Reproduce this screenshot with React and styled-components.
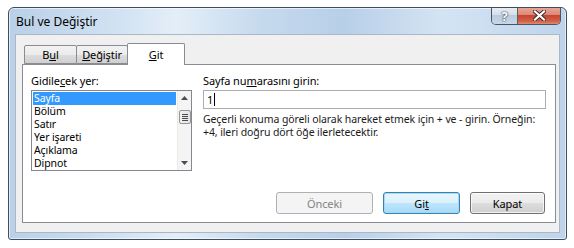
import React from "react";
import styled, { createGlobalStyle } from "styled-components";

const Global = createGlobalStyle`
  html, body { margin: 0; padding: 0; background: #ffffff; }
  body { font-family: "Noto Sans", "Open Sans", sans-serif; font-size: 10.5px; letter-spacing: -0.1px; color: #000; }
  * { box-sizing: border-box; }
`;

const Window = styled.div`
  margin: 7px 0 0 8px;
  width: 559px;
  height: 233px;
  display: flex;
  flex-direction: column;
  border: 1px solid #3e4e60;
  border-radius: 6px 6px 3px 3px;
  background: linear-gradient(90deg, #b9d0e8 0%, #cfe0f1 18%, #e4eef8 30%, #c6daee 45%, #b8cfe8 60%, #d4e4f3 78%, #bed4eb 100%);
  box-shadow: inset 0 0 0 1px rgba(255,255,255,0.6);
  overflow: hidden;
`;

const TitleBar = styled.div`
  height: 26px;
  display: flex;
  align-items: flex-start;
  justify-content: space-between;
  padding-left: 7px;
  flex: none;
`;

const Title = styled.div`
  font-size: 12px;
  line-height: 26px;
  padding-top: 1px;
  letter-spacing: 0;
  color: #000;
`;

const Controls = styled.div`
  display: flex;
  margin-right: 5px;
  margin-top: -1px;
  border: 1px solid #4a5668;
  border-top: none;
  border-radius: 0 0 5px 5px;
  overflow: hidden;
  height: 18px;
`;

const CtrlButton = styled.div`
  width: ${p => p.$w}px;
  height: 17px;
  display: flex;
  align-items: center;
  justify-content: center;
  background: ${p => p.$close
    ? "linear-gradient(180deg, #e9a99c 0%, #dc8a78 45%, #c5452d 50%, #d2634c 85%, #e48a6e 100%)"
    : "linear-gradient(180deg, #e8eef5 0%, #d5e0ec 45%, #bccbdc 50%, #c9d8e8 100%)"};
  border-left: ${p => p.$close ? "1px solid #5a5f6a" : "none"};
  color: #fff;
  font-size: 13px;
  font-weight: bold;
  text-shadow: 0 0 2px #334, 0 0 1px #334;
`;

const Body = styled.div`
  flex: 1;
  margin: 0 6px 6px 6px;
  background: #f0f0f0;
  border: 1px solid #a9b7c6;
  padding: 8px 3px 9px 6px;
  display: flex;
  flex-direction: column;
`;

const Tabs = styled.div`
  display: flex;
  align-items: flex-end;
  height: 21px;
  padding-left: 2px;
  position: relative;
  z-index: 1;
`;

const Tab = styled.div`
  width: ${p => p.$w}px;
  height: ${p => (p.$active ? 22 : 19)}px;
  margin-bottom: ${p => (p.$active ? -1 : 0)}px;
  margin-left: ${p => (p.$first ? 0 : -1)}px;
  border: 1px solid #898c95;
  border-bottom: ${p => (p.$active ? "none" : "1px solid #898c95")};
  background: ${p => (p.$active ? "#ffffff" : "linear-gradient(180deg, #f3f3f3 0%, #ebebeb 50%, #dddddd 51%, #cfcfcf 100%)")};
  display: flex;
  justify-content: center;
  align-items: ${p => (p.$active ? "flex-start" : "center")};
  padding-top: ${p => (p.$active ? 3 : 0)}px;
  font-size: 11px;
  border-radius: 2px 2px 0 0;
`;

const Panel = styled.div`
  flex: 1;
  background: #fff;
  border: 1px solid #898c95;
  padding: 9px 9px 8px 8px;
  display: flex;
  flex-direction: column;
`;

const Columns = styled.div`
  display: grid;
  grid-template-columns: 161px 1fr;
  column-gap: 11px;
`;

const Label = styled.div`
  font-size: 11px;
  line-height: 14px;
  margin-bottom: 2px;
`;

const ListBox = styled.div`
  height: 81px;
  border: 1px solid #828790;
  display: flex;
`;

const Items = styled.div`
  flex: 1;
  padding: 1px 1px 0 1px;
  overflow: hidden;
`;

const Item = styled.div`
  height: 13px;
  line-height: 13px;
  padding-left: 1px;
  font-size: 10.5px;
  background: ${p => (p.$sel ? "#3399ff" : "transparent")};
  color: ${p => (p.$sel ? "#fff" : "#000")};
  white-space: nowrap;
`;

const ScrollBar = styled.div`
  width: 14px;
  background: #f4f4f4;
  border-left: 1px solid #eaeaea;
  display: flex;
  flex-direction: column;
  align-items: center;
`;

const Arrow = styled.div`
  height: 14px;
  width: 100%;
  display: flex;
  align-items: center;
  justify-content: center;
`;

const Thumb = styled.div`
  width: 12px;
  height: 14px;
  margin-top: 5px;
  border: 1px solid #959595;
  border-radius: 2px;
  background: linear-gradient(90deg, #f3f3f3, #e2e2e2);
  display: flex;
  flex-direction: column;
  justify-content: center;
  align-items: center;
  gap: 1px;
`;

const Grip = styled.div`
  width: 6px;
  height: 1px;
  background: #4b4b4b;
`;

const Spacer = styled.div`
  flex: 1;
`;

const Input = styled.div`
  height: 19px;
  border: 1px solid #abadb3;
  padding-left: 3px;
  display: flex;
  align-items: center;
  font-size: 11px;
`;

const Caret = styled.span`
  display: inline-block;
  width: 1px;
  height: 13px;
  background: #000;
  margin-left: 1px;
`;

const Help = styled.div`
  margin-top: 4px;
  font-size: 10.5px;
  line-height: 13px;
  color: #1a1a1a;
  white-space: nowrap;
`;

const ButtonRow = styled.div`
  margin-top: auto;
  display: flex;
  justify-content: flex-end;
  gap: 10px;
  padding-right: 1px;
`;

const Button = styled.div`
  width: ${p => p.$w || 75}px;
  height: 22px;
  border-radius: 3px;
  display: flex;
  align-items: center;
  justify-content: center;
  font-size: 11px;
  border: 1px solid ${p => (p.$default ? "#3c7fb1" : p.$disabled ? "#adb2b5" : "#707070")};
  color: ${p => (p.$disabled ? "#838383" : "#000")};
  background: ${p => p.$disabled
    ? "#f4f4f4"
    : p.$default
      ? "linear-gradient(180deg, #eaf6fd 0%, #d9f0fc 50%, #bee6fd 51%, #a7d9f5 100%)"
      : "linear-gradient(180deg, #f2f2f2 0%, #ebebeb 50%, #dddddd 51%, #cfcfcf 100%)"};
  box-shadow: ${p => (p.$default ? "inset 0 0 0 1px #9fdcf8" : p.$disabled ? "none" : "inset 0 0 0 1px rgba(255,255,255,0.7)")};
`;

const items = ["Sayfa", "Bölüm", "Satır", "Yer işareti", "Açıklama", "Dipnot"];

export default function App() {
  return (
    <>
      <Global />
      <Window>
        <TitleBar>
          <Title>Bul ve Değiştir</Title>
          <Controls>
            <CtrlButton $w={25}>?</CtrlButton>
            <CtrlButton $w={43} $close>
              <svg width="13" height="11" viewBox="0 0 13 11">
                <path d="M2 1.5 L11 9.5 M11 1.5 L2 9.5" stroke="#3a2a2a" strokeWidth="4" strokeLinecap="square" />
                <path d="M2 1.5 L11 9.5 M11 1.5 L2 9.5" stroke="#fff" strokeWidth="2.2" strokeLinecap="square" />
              </svg>
            </CtrlButton>
          </Controls>
        </TitleBar>
        <Body>
          <Tabs>
            <Tab $w={53} $first>B<u>u</u>l</Tab>
            <Tab $w={52}><u>D</u>eğiştir</Tab>
            <Tab $w={58} $active><u>G</u>it</Tab>
          </Tabs>
          <Panel>
            <Columns>
              <div>
                <Label>Gidile<u>c</u>ek yer:</Label>
                <ListBox>
                  <Items>
                    {items.map((t, i) => (
                      <Item key={t} $sel={i === 0}>{t}</Item>
                    ))}
                  </Items>
                  <ScrollBar>
                    <Arrow>
                      <svg width="7" height="4" viewBox="0 0 7 4"><path d="M0 4 L3.5 0 L7 4 Z" fill="#4d4d4d" /></svg>
                    </Arrow>
                    <Thumb>
                      <Grip /><Grip /><Grip /><Grip />
                    </Thumb>
                    <Spacer />
                    <Arrow>
                      <svg width="7" height="4" viewBox="0 0 7 4"><path d="M0 0 L3.5 4 L7 0 Z" fill="#4d4d4d" /></svg>
                    </Arrow>
                  </ScrollBar>
                </ListBox>
              </div>
              <div>
                <Label>Sayfa nu<u>m</u>arasını girin:</Label>
                <Input>1<Caret /></Input>
                <Help>
                  Geçerli konuma göreli olarak hareket etmek için + ve - girin. Örneğin:<br />
                  +4, ileri doğru dört öğe ilerletecektir.
                </Help>
              </div>
            </Columns>
            <ButtonRow>
              <Button $disabled $w={97}>Önceki</Button>
              <Button $default $w={77}>Gi<u>t</u></Button>
              <Button $w={75}>Kapat</Button>
            </ButtonRow>
          </Panel>
        </Body>
      </Window>
    </>
  );
}
